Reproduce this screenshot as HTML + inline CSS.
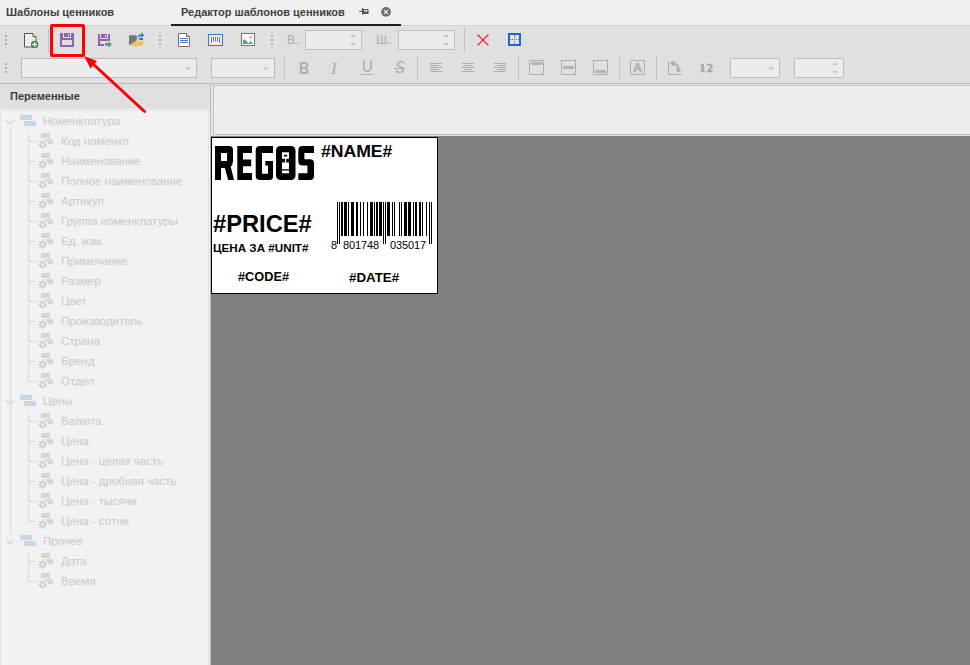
<!DOCTYPE html>
<html><head><meta charset="utf-8">
<style>
*{margin:0;padding:0;box-sizing:border-box}
html,body{width:970px;height:665px;overflow:hidden;background:#f0f0f0;font-family:"Liberation Sans",sans-serif}
.a{position:absolute}
.tab{font-size:11px;font-weight:bold;color:#404040;top:6px;white-space:nowrap}
.grip{width:2px;height:10px}
.grip i{position:absolute;left:0;width:2px;height:2px;background:#a9a9a9}
.sep{width:1px;background:#c2c2c2}
.spin{background:#ececec;border:1px solid #bdbdbd}
.ti{font-size:11.5px;color:#c8c8c8;white-space:nowrap;line-height:14px}
.lt{font-weight:bold;color:#000;white-space:nowrap;transform-origin:0 0}
.gl{font-size:12px;color:#acacac}
</style></head><body>
<!-- tabs -->
<div class="a" style="left:0;top:0;width:970px;height:25px;background:#f0f0f0"></div>
<div class="a tab" style="left:6px">Шаблоны ценников</div>
<div class="a tab" style="left:181px">Редактор шаблонов ценников</div>
<!-- toolbars -->
<div class="a" style="left:0;top:25px;width:970px;height:1px;background:#d6d6d6"></div>
<div class="a" style="left:0;top:26px;width:970px;height:57px;background:#e0e0e0"></div>
<div class="a" style="left:0;top:83px;width:970px;height:1px;background:#bcbcbc"></div>
<div class="a" style="left:171px;top:24px;width:230px;height:2px;background:#1e1e1e"></div>
<div class="a grip" style="left:5px;top:35px"><i style="top:0"></i><i style="top:4px"></i><i style="top:8px"></i></div>
<div class="a grip" style="left:159px;top:35px"><i style="top:0"></i><i style="top:4px"></i><i style="top:8px"></i></div>
<div class="a grip" style="left:271px;top:35px"><i style="top:0"></i><i style="top:4px"></i><i style="top:8px"></i></div>
<div class="a grip" style="left:5px;top:63px"><i style="top:0"></i><i style="top:4px"></i><i style="top:8px"></i></div>
<div class="a sep" style="left:48px;top:28px;height:24px"></div>
<div class="a sep" style="left:464px;top:28px;height:24px"></div>
<div class="a sep" style="left:284px;top:56px;height:24px"></div>
<div class="a sep" style="left:417px;top:56px;height:24px"></div>
<div class="a sep" style="left:518px;top:56px;height:24px"></div>
<div class="a sep" style="left:619px;top:56px;height:24px"></div>
<div class="a sep" style="left:656px;top:56px;height:24px"></div>
<!-- row1 icons -->
<svg class="a" style="left:0;top:0" width="970" height="84">
 <path d="M24.5 33.5h8.5v3h3v10.5h-11.5z" fill="#efefef" stroke="#555" stroke-width="1"/>
 <circle cx="34.6" cy="44.4" r="3.7" fill="#2e8b4a"/>
 <path d="M32.2 44.5h4.8M34.6 42.1v4.8" stroke="#fff" stroke-width="1.3"/>
 <path d="M60 33H63V38H71V33H74V47H60Z M62 40V45H72V40Z" fill="#9161b2" fill-rule="evenodd"/>
 <rect x="64" y="33" width="6" height="4" fill="#9161b2"/>
 <rect x="68" y="34" width="1" height="2" fill="#dfdfdf"/>
 <path d="M98 34H100V39H108V34H110V41H100V44H104V46H98Z" fill="#9161b2"/>
 <rect x="101" y="34" width="6" height="4" fill="#9161b2"/>
 <rect x="105" y="35" width="1" height="2" fill="#dfdfdf"/>
 <path d="M105 43H108.5V41.4L112 44.5L108.5 47.6V45.8H105Z" fill="#5a9e86"/>
 <path d="M129 45.5V36.3Q129 35.2 130 35.2H135.5Q136.5 35.2 136.8 36.3V40.5Z" fill="#777"/>
 <rect x="139" y="38" width="4" height="2" fill="#6e6e6e"/>
 <path d="M130.5 46L133.5 42H137L137.5 41H144L142 46Z" fill="#eec062"/>
 <path d="M137 38.5Q137.5 34.2 141.2 34.2V32.2L144.3 35.2L141.2 38V36.3Q138.5 36.3 137 38.5Z" fill="#3c7ec8"/>
 <path d="M178.5 33.5h8l3 3v10h-11z" fill="#fff" stroke="#737373" stroke-width="1"/>
 <path d="M186.5 33.5v3h3" fill="#ddd" stroke="#737373" stroke-width="1"/>
 <path d="M180 38.5h8M180 40.5h8M180 42.5h8" stroke="#3d7cc5" stroke-width="1"/>
 <rect x="208.5" y="34.5" width="14" height="11" fill="#efefef" stroke="#3d7cc5" stroke-width="1.1"/>
 <path d="M211.5 37v6M213.5 37v4.5M215.5 37v4.5M217.5 37v4.5M219.5 37v6" stroke="#7a7a7a" stroke-width="1"/>
 <rect x="241.5" y="33.5" width="13" height="12" fill="#fff" stroke="#777" stroke-width="1.1"/>
 <path d="M243 44V40.5L244.5 39L248.5 43.5L250.5 41L253 44Z" fill="#5a9e84"/>
 <circle cx="250.5" cy="37.3" r="1.5" fill="#eec062"/>
 <path d="M477.5 34.5l11 11M488.5 34.5l-11 11" stroke="#e0303e" stroke-width="1.4"/>
 <rect x="509" y="34" width="11" height="11" fill="#e4e4e4" stroke="#2566c8" stroke-width="2"/>
 <rect x="514" y="35" width="1" height="1" fill="#4f74ac"/><rect x="514" y="37" width="1" height="1" fill="#4f74ac"/><rect x="514" y="41" width="1" height="1" fill="#4f74ac"/><rect x="514" y="43" width="1" height="1" fill="#4f74ac"/><rect x="510" y="39" width="1" height="1" fill="#4f74ac"/><rect x="512" y="39" width="1" height="1" fill="#4f74ac"/><rect x="514" y="39" width="1" height="1" fill="#4f74ac"/><rect x="516" y="39" width="1" height="1" fill="#4f74ac"/><rect x="518" y="39" width="1" height="1" fill="#4f74ac"/>
 <path d="M359 11.3h3.5M362.5 8v6.8" stroke="#555" stroke-width="1.1"/>
 <rect x="363.5" y="9.5" width="4.5" height="4" fill="none" stroke="#555" stroke-width="1"/>
 <rect x="363" y="11.5" width="5" height="2.5" fill="#555"/>
 <circle cx="386" cy="11.9" r="4.9" fill="#6e6e6e"/>
 <path d="M384 9.9l4 4M388 9.9l-4 4" stroke="#f0f0f0" stroke-width="1.3"/>
</svg>
<div class="a gl" style="left:287px;top:33px;letter-spacing:-0.8px">В.:</div>
<div class="a spin" style="left:305px;top:30px;width:57px;height:20px"></div>
<svg class="a" style="left:349px;top:33px" width="8" height="14"><path d="M1 4l3-3 3 3z" fill="#c6c6c6"/><path d="M1 10l3 3 3-3z" fill="#c6c6c6"/></svg>
<div class="a gl" style="left:376px;top:33px;letter-spacing:-0.8px">Ш.:</div>
<div class="a spin" style="left:398px;top:30px;width:57px;height:20px"></div>
<svg class="a" style="left:442px;top:33px" width="8" height="14"><path d="M1 4l3-3 3 3z" fill="#c6c6c6"/><path d="M1 10l3 3 3-3z" fill="#c6c6c6"/></svg>
<!-- row2 -->
<div class="a spin" style="left:21px;top:58px;width:176px;height:20px"></div>
<svg class="a" style="left:184px;top:66px" width="8" height="6"><path d="M1 1.5h6l-3 3z" fill="#c6c6c6"/></svg>
<div class="a spin" style="left:211px;top:58px;width:64px;height:20px"></div>
<svg class="a" style="left:262px;top:66px" width="8" height="6"><path d="M1 1.5h6l-3 3z" fill="#c6c6c6"/></svg>
<div class="a" style="left:299px;top:60px;font-size:16px;font-weight:bold;color:#acacac;transform:scaleX(0.87);transform-origin:0 0">B</div>
<div class="a" style="left:331px;top:58px;font-size:17.5px;font-style:italic;font-family:'Liberation Serif',serif;color:#acacac">I</div>
<div class="a" style="left:362px;top:58px;font-size:16px;color:#acacac;transform:scaleX(0.92);transform-origin:0 0">U</div>
<div class="a" style="left:361px;top:74px;width:12px;height:1px;background:#acacac"></div>
<div class="a" style="left:394.5px;top:59px;font-size:16px;font-style:italic;color:#acacac;transform:scaleX(0.9);transform-origin:0 0">S</div>
<div class="a" style="left:393.5px;top:68px;width:11px;height:1px;background:#acacac"></div>
<svg class="a" style="left:428px;top:60px" width="16" height="14"><path d="M2 3.5h12M2 5.5h9M2 7.5h12M2 9.5h9M2 11.5h12" stroke="#adadad" stroke-width="1"/></svg>
<svg class="a" style="left:460px;top:60px" width="16" height="14"><path d="M2 3.5h12M4 5.5h8M2 7.5h12M4 9.5h8M2 11.5h12" stroke="#adadad" stroke-width="1"/></svg>
<svg class="a" style="left:492px;top:60px" width="16" height="14"><path d="M2 3.5h12M5 5.5h9M2 7.5h12M5 9.5h9M2 11.5h12" stroke="#adadad" stroke-width="1"/></svg>
<svg class="a" style="left:528px;top:59px" width="17" height="17"><rect x="1.5" y="1.5" width="14" height="14" fill="none" stroke="#adadad"/><rect x="3" y="3" width="11" height="3" fill="#b4b4b4"/></svg>
<svg class="a" style="left:560px;top:59px" width="17" height="17"><rect x="1.5" y="1.5" width="14" height="14" fill="none" stroke="#adadad"/><rect x="3" y="7" width="11" height="3" fill="#b4b4b4"/></svg>
<svg class="a" style="left:592px;top:59px" width="17" height="17"><rect x="1.5" y="1.5" width="14" height="14" fill="none" stroke="#adadad"/><rect x="3" y="11" width="11" height="3" fill="#b4b4b4"/></svg>
<svg class="a" style="left:629px;top:59px" width="17" height="17"><rect x="1.5" y="1.5" width="14" height="14" fill="none" stroke="#adadad"/><text x="8.5" y="13" text-anchor="middle" font-family="Liberation Sans" font-weight="bold" font-size="12.5" fill="#b0b0b0" stroke="#b0b0b0" stroke-width="0.4">A</text></svg>
<svg class="a" style="left:0;top:0" width="970" height="84">
 <path d="M668.5 61v13.5h13.5" fill="none" stroke="#acacac" stroke-width="1"/>
 <path d="M669.9 63.4L673.6 60V66.8Z" fill="#acacac"/>
 <path d="M673 63.4A5.6 5.8 0 0 1 678.5 69.5" fill="none" stroke="#acacac" stroke-width="2.1"/>
 <path d="M675 69.2H682L678.4 72.8Z" fill="#acacac"/>
</svg>
<div class="a" style="left:699.5px;top:61px;font-size:12px;font-weight:bold;font-family:'Liberation Serif',serif;color:#a4a4a4;-webkit-text-stroke:0.5px #a4a4a4;letter-spacing:1.3px">12</div>
<div class="a spin" style="left:730px;top:58px;width:50px;height:20px"></div>
<svg class="a" style="left:767px;top:66px" width="8" height="6"><path d="M1 1.5h6l-3 3z" fill="#c6c6c6"/></svg>
<div class="a spin" style="left:794px;top:58px;width:50px;height:20px"></div>
<svg class="a" style="left:831px;top:61px" width="8" height="14"><path d="M1 4l3-3 3 3z" fill="#c6c6c6"/><path d="M1 10l3 3 3-3z" fill="#c6c6c6"/></svg>

<!-- left panel -->
<div class="a" style="left:0;top:84px;width:210px;height:25px;background:#e0e0e0"></div>
<div class="a" style="left:10px;top:90px;font-size:11px;font-weight:bold;color:#3b3b3b">Переменные</div>
<div class="a" style="left:0;top:109px;width:210px;height:556px;background:#f0f0f0"></div>
<div class="a" style="left:0;top:110px;width:209px;height:555px;background:#f2f2f2;border-left:1px solid #e4e4e4;border-top:1px solid #e4e4e4;border-right:1px solid #e4e4e4"></div>
<svg class="a" style="left:0;top:0" width="210" height="665"><path d="M6.5 120.5 L10 124 L13.5 120.5" fill="none" stroke="#d2d2d2" stroke-width="1.2"/><rect x="17" y="121" width="1" height="1" fill="#c8c8c8"/><rect x="20" y="115" width="12" height="5" fill="#c9d6e6"/><rect x="24" y="121" width="12" height="5" fill="#c9d6e6"/><rect x="41" y="133" width="9" height="5" fill="#d6d6d6"/><rect x="44" y="139" width="9" height="5" fill="#d6d6d6"/><circle cx="42.5" cy="144.5" r="5.5" fill="#f2f2f2"/><g stroke="#c3d2e4" stroke-width="1.3"><line x1="44.70" y1="144.50" x2="46.80" y2="144.50"/><line x1="44.06" y1="146.06" x2="45.54" y2="147.54"/><line x1="42.50" y1="146.70" x2="42.50" y2="148.80"/><line x1="40.94" y1="146.06" x2="39.46" y2="147.54"/><line x1="40.30" y1="144.50" x2="38.20" y2="144.50"/><line x1="40.94" y1="142.94" x2="39.46" y2="141.46"/><line x1="42.50" y1="142.30" x2="42.50" y2="140.20"/><line x1="44.06" y1="142.94" x2="45.54" y2="141.46"/><circle cx="42.5" cy="144.5" r="2.3" fill="none" stroke-width="1.4"/></g><rect x="29" y="141" width="1" height="1" fill="#c4c4c4"/><rect x="31" y="141" width="1" height="1" fill="#c4c4c4"/><rect x="33" y="141" width="1" height="1" fill="#c4c4c4"/><rect x="35" y="141" width="1" height="1" fill="#c4c4c4"/><rect x="41" y="153" width="9" height="5" fill="#d6d6d6"/><rect x="44" y="159" width="9" height="5" fill="#d6d6d6"/><circle cx="42.5" cy="164.5" r="5.5" fill="#f2f2f2"/><g stroke="#c3d2e4" stroke-width="1.3"><line x1="44.70" y1="164.50" x2="46.80" y2="164.50"/><line x1="44.06" y1="166.06" x2="45.54" y2="167.54"/><line x1="42.50" y1="166.70" x2="42.50" y2="168.80"/><line x1="40.94" y1="166.06" x2="39.46" y2="167.54"/><line x1="40.30" y1="164.50" x2="38.20" y2="164.50"/><line x1="40.94" y1="162.94" x2="39.46" y2="161.46"/><line x1="42.50" y1="162.30" x2="42.50" y2="160.20"/><line x1="44.06" y1="162.94" x2="45.54" y2="161.46"/><circle cx="42.5" cy="164.5" r="2.3" fill="none" stroke-width="1.4"/></g><rect x="29" y="161" width="1" height="1" fill="#c4c4c4"/><rect x="31" y="161" width="1" height="1" fill="#c4c4c4"/><rect x="33" y="161" width="1" height="1" fill="#c4c4c4"/><rect x="35" y="161" width="1" height="1" fill="#c4c4c4"/><rect x="41" y="173" width="9" height="5" fill="#d6d6d6"/><rect x="44" y="179" width="9" height="5" fill="#d6d6d6"/><circle cx="42.5" cy="184.5" r="5.5" fill="#f2f2f2"/><g stroke="#c3d2e4" stroke-width="1.3"><line x1="44.70" y1="184.50" x2="46.80" y2="184.50"/><line x1="44.06" y1="186.06" x2="45.54" y2="187.54"/><line x1="42.50" y1="186.70" x2="42.50" y2="188.80"/><line x1="40.94" y1="186.06" x2="39.46" y2="187.54"/><line x1="40.30" y1="184.50" x2="38.20" y2="184.50"/><line x1="40.94" y1="182.94" x2="39.46" y2="181.46"/><line x1="42.50" y1="182.30" x2="42.50" y2="180.20"/><line x1="44.06" y1="182.94" x2="45.54" y2="181.46"/><circle cx="42.5" cy="184.5" r="2.3" fill="none" stroke-width="1.4"/></g><rect x="29" y="181" width="1" height="1" fill="#c4c4c4"/><rect x="31" y="181" width="1" height="1" fill="#c4c4c4"/><rect x="33" y="181" width="1" height="1" fill="#c4c4c4"/><rect x="35" y="181" width="1" height="1" fill="#c4c4c4"/><rect x="41" y="193" width="9" height="5" fill="#d6d6d6"/><rect x="44" y="199" width="9" height="5" fill="#d6d6d6"/><circle cx="42.5" cy="204.5" r="5.5" fill="#f2f2f2"/><g stroke="#c3d2e4" stroke-width="1.3"><line x1="44.70" y1="204.50" x2="46.80" y2="204.50"/><line x1="44.06" y1="206.06" x2="45.54" y2="207.54"/><line x1="42.50" y1="206.70" x2="42.50" y2="208.80"/><line x1="40.94" y1="206.06" x2="39.46" y2="207.54"/><line x1="40.30" y1="204.50" x2="38.20" y2="204.50"/><line x1="40.94" y1="202.94" x2="39.46" y2="201.46"/><line x1="42.50" y1="202.30" x2="42.50" y2="200.20"/><line x1="44.06" y1="202.94" x2="45.54" y2="201.46"/><circle cx="42.5" cy="204.5" r="2.3" fill="none" stroke-width="1.4"/></g><rect x="29" y="201" width="1" height="1" fill="#c4c4c4"/><rect x="31" y="201" width="1" height="1" fill="#c4c4c4"/><rect x="33" y="201" width="1" height="1" fill="#c4c4c4"/><rect x="35" y="201" width="1" height="1" fill="#c4c4c4"/><rect x="41" y="213" width="9" height="5" fill="#d6d6d6"/><rect x="44" y="219" width="9" height="5" fill="#d6d6d6"/><circle cx="42.5" cy="224.5" r="5.5" fill="#f2f2f2"/><g stroke="#c3d2e4" stroke-width="1.3"><line x1="44.70" y1="224.50" x2="46.80" y2="224.50"/><line x1="44.06" y1="226.06" x2="45.54" y2="227.54"/><line x1="42.50" y1="226.70" x2="42.50" y2="228.80"/><line x1="40.94" y1="226.06" x2="39.46" y2="227.54"/><line x1="40.30" y1="224.50" x2="38.20" y2="224.50"/><line x1="40.94" y1="222.94" x2="39.46" y2="221.46"/><line x1="42.50" y1="222.30" x2="42.50" y2="220.20"/><line x1="44.06" y1="222.94" x2="45.54" y2="221.46"/><circle cx="42.5" cy="224.5" r="2.3" fill="none" stroke-width="1.4"/></g><rect x="29" y="221" width="1" height="1" fill="#c4c4c4"/><rect x="31" y="221" width="1" height="1" fill="#c4c4c4"/><rect x="33" y="221" width="1" height="1" fill="#c4c4c4"/><rect x="35" y="221" width="1" height="1" fill="#c4c4c4"/><rect x="41" y="233" width="9" height="5" fill="#d6d6d6"/><rect x="44" y="239" width="9" height="5" fill="#d6d6d6"/><circle cx="42.5" cy="244.5" r="5.5" fill="#f2f2f2"/><g stroke="#c3d2e4" stroke-width="1.3"><line x1="44.70" y1="244.50" x2="46.80" y2="244.50"/><line x1="44.06" y1="246.06" x2="45.54" y2="247.54"/><line x1="42.50" y1="246.70" x2="42.50" y2="248.80"/><line x1="40.94" y1="246.06" x2="39.46" y2="247.54"/><line x1="40.30" y1="244.50" x2="38.20" y2="244.50"/><line x1="40.94" y1="242.94" x2="39.46" y2="241.46"/><line x1="42.50" y1="242.30" x2="42.50" y2="240.20"/><line x1="44.06" y1="242.94" x2="45.54" y2="241.46"/><circle cx="42.5" cy="244.5" r="2.3" fill="none" stroke-width="1.4"/></g><rect x="29" y="241" width="1" height="1" fill="#c4c4c4"/><rect x="31" y="241" width="1" height="1" fill="#c4c4c4"/><rect x="33" y="241" width="1" height="1" fill="#c4c4c4"/><rect x="35" y="241" width="1" height="1" fill="#c4c4c4"/><rect x="41" y="253" width="9" height="5" fill="#d6d6d6"/><rect x="44" y="259" width="9" height="5" fill="#d6d6d6"/><circle cx="42.5" cy="264.5" r="5.5" fill="#f2f2f2"/><g stroke="#c3d2e4" stroke-width="1.3"><line x1="44.70" y1="264.50" x2="46.80" y2="264.50"/><line x1="44.06" y1="266.06" x2="45.54" y2="267.54"/><line x1="42.50" y1="266.70" x2="42.50" y2="268.80"/><line x1="40.94" y1="266.06" x2="39.46" y2="267.54"/><line x1="40.30" y1="264.50" x2="38.20" y2="264.50"/><line x1="40.94" y1="262.94" x2="39.46" y2="261.46"/><line x1="42.50" y1="262.30" x2="42.50" y2="260.20"/><line x1="44.06" y1="262.94" x2="45.54" y2="261.46"/><circle cx="42.5" cy="264.5" r="2.3" fill="none" stroke-width="1.4"/></g><rect x="29" y="261" width="1" height="1" fill="#c4c4c4"/><rect x="31" y="261" width="1" height="1" fill="#c4c4c4"/><rect x="33" y="261" width="1" height="1" fill="#c4c4c4"/><rect x="35" y="261" width="1" height="1" fill="#c4c4c4"/><rect x="41" y="273" width="9" height="5" fill="#d6d6d6"/><rect x="44" y="279" width="9" height="5" fill="#d6d6d6"/><circle cx="42.5" cy="284.5" r="5.5" fill="#f2f2f2"/><g stroke="#c3d2e4" stroke-width="1.3"><line x1="44.70" y1="284.50" x2="46.80" y2="284.50"/><line x1="44.06" y1="286.06" x2="45.54" y2="287.54"/><line x1="42.50" y1="286.70" x2="42.50" y2="288.80"/><line x1="40.94" y1="286.06" x2="39.46" y2="287.54"/><line x1="40.30" y1="284.50" x2="38.20" y2="284.50"/><line x1="40.94" y1="282.94" x2="39.46" y2="281.46"/><line x1="42.50" y1="282.30" x2="42.50" y2="280.20"/><line x1="44.06" y1="282.94" x2="45.54" y2="281.46"/><circle cx="42.5" cy="284.5" r="2.3" fill="none" stroke-width="1.4"/></g><rect x="29" y="281" width="1" height="1" fill="#c4c4c4"/><rect x="31" y="281" width="1" height="1" fill="#c4c4c4"/><rect x="33" y="281" width="1" height="1" fill="#c4c4c4"/><rect x="35" y="281" width="1" height="1" fill="#c4c4c4"/><rect x="41" y="293" width="9" height="5" fill="#d6d6d6"/><rect x="44" y="299" width="9" height="5" fill="#d6d6d6"/><circle cx="42.5" cy="304.5" r="5.5" fill="#f2f2f2"/><g stroke="#c3d2e4" stroke-width="1.3"><line x1="44.70" y1="304.50" x2="46.80" y2="304.50"/><line x1="44.06" y1="306.06" x2="45.54" y2="307.54"/><line x1="42.50" y1="306.70" x2="42.50" y2="308.80"/><line x1="40.94" y1="306.06" x2="39.46" y2="307.54"/><line x1="40.30" y1="304.50" x2="38.20" y2="304.50"/><line x1="40.94" y1="302.94" x2="39.46" y2="301.46"/><line x1="42.50" y1="302.30" x2="42.50" y2="300.20"/><line x1="44.06" y1="302.94" x2="45.54" y2="301.46"/><circle cx="42.5" cy="304.5" r="2.3" fill="none" stroke-width="1.4"/></g><rect x="29" y="301" width="1" height="1" fill="#c4c4c4"/><rect x="31" y="301" width="1" height="1" fill="#c4c4c4"/><rect x="33" y="301" width="1" height="1" fill="#c4c4c4"/><rect x="35" y="301" width="1" height="1" fill="#c4c4c4"/><rect x="41" y="313" width="9" height="5" fill="#d6d6d6"/><rect x="44" y="319" width="9" height="5" fill="#d6d6d6"/><circle cx="42.5" cy="324.5" r="5.5" fill="#f2f2f2"/><g stroke="#c3d2e4" stroke-width="1.3"><line x1="44.70" y1="324.50" x2="46.80" y2="324.50"/><line x1="44.06" y1="326.06" x2="45.54" y2="327.54"/><line x1="42.50" y1="326.70" x2="42.50" y2="328.80"/><line x1="40.94" y1="326.06" x2="39.46" y2="327.54"/><line x1="40.30" y1="324.50" x2="38.20" y2="324.50"/><line x1="40.94" y1="322.94" x2="39.46" y2="321.46"/><line x1="42.50" y1="322.30" x2="42.50" y2="320.20"/><line x1="44.06" y1="322.94" x2="45.54" y2="321.46"/><circle cx="42.5" cy="324.5" r="2.3" fill="none" stroke-width="1.4"/></g><rect x="29" y="321" width="1" height="1" fill="#c4c4c4"/><rect x="31" y="321" width="1" height="1" fill="#c4c4c4"/><rect x="33" y="321" width="1" height="1" fill="#c4c4c4"/><rect x="35" y="321" width="1" height="1" fill="#c4c4c4"/><rect x="41" y="333" width="9" height="5" fill="#d6d6d6"/><rect x="44" y="339" width="9" height="5" fill="#d6d6d6"/><circle cx="42.5" cy="344.5" r="5.5" fill="#f2f2f2"/><g stroke="#c3d2e4" stroke-width="1.3"><line x1="44.70" y1="344.50" x2="46.80" y2="344.50"/><line x1="44.06" y1="346.06" x2="45.54" y2="347.54"/><line x1="42.50" y1="346.70" x2="42.50" y2="348.80"/><line x1="40.94" y1="346.06" x2="39.46" y2="347.54"/><line x1="40.30" y1="344.50" x2="38.20" y2="344.50"/><line x1="40.94" y1="342.94" x2="39.46" y2="341.46"/><line x1="42.50" y1="342.30" x2="42.50" y2="340.20"/><line x1="44.06" y1="342.94" x2="45.54" y2="341.46"/><circle cx="42.5" cy="344.5" r="2.3" fill="none" stroke-width="1.4"/></g><rect x="29" y="341" width="1" height="1" fill="#c4c4c4"/><rect x="31" y="341" width="1" height="1" fill="#c4c4c4"/><rect x="33" y="341" width="1" height="1" fill="#c4c4c4"/><rect x="35" y="341" width="1" height="1" fill="#c4c4c4"/><rect x="41" y="353" width="9" height="5" fill="#d6d6d6"/><rect x="44" y="359" width="9" height="5" fill="#d6d6d6"/><circle cx="42.5" cy="364.5" r="5.5" fill="#f2f2f2"/><g stroke="#c3d2e4" stroke-width="1.3"><line x1="44.70" y1="364.50" x2="46.80" y2="364.50"/><line x1="44.06" y1="366.06" x2="45.54" y2="367.54"/><line x1="42.50" y1="366.70" x2="42.50" y2="368.80"/><line x1="40.94" y1="366.06" x2="39.46" y2="367.54"/><line x1="40.30" y1="364.50" x2="38.20" y2="364.50"/><line x1="40.94" y1="362.94" x2="39.46" y2="361.46"/><line x1="42.50" y1="362.30" x2="42.50" y2="360.20"/><line x1="44.06" y1="362.94" x2="45.54" y2="361.46"/><circle cx="42.5" cy="364.5" r="2.3" fill="none" stroke-width="1.4"/></g><rect x="29" y="361" width="1" height="1" fill="#c4c4c4"/><rect x="31" y="361" width="1" height="1" fill="#c4c4c4"/><rect x="33" y="361" width="1" height="1" fill="#c4c4c4"/><rect x="35" y="361" width="1" height="1" fill="#c4c4c4"/><rect x="41" y="373" width="9" height="5" fill="#d6d6d6"/><rect x="44" y="379" width="9" height="5" fill="#d6d6d6"/><circle cx="42.5" cy="384.5" r="5.5" fill="#f2f2f2"/><g stroke="#c3d2e4" stroke-width="1.3"><line x1="44.70" y1="384.50" x2="46.80" y2="384.50"/><line x1="44.06" y1="386.06" x2="45.54" y2="387.54"/><line x1="42.50" y1="386.70" x2="42.50" y2="388.80"/><line x1="40.94" y1="386.06" x2="39.46" y2="387.54"/><line x1="40.30" y1="384.50" x2="38.20" y2="384.50"/><line x1="40.94" y1="382.94" x2="39.46" y2="381.46"/><line x1="42.50" y1="382.30" x2="42.50" y2="380.20"/><line x1="44.06" y1="382.94" x2="45.54" y2="381.46"/><circle cx="42.5" cy="384.5" r="2.3" fill="none" stroke-width="1.4"/></g><rect x="29" y="381" width="1" height="1" fill="#c4c4c4"/><rect x="31" y="381" width="1" height="1" fill="#c4c4c4"/><rect x="33" y="381" width="1" height="1" fill="#c4c4c4"/><rect x="35" y="381" width="1" height="1" fill="#c4c4c4"/><path d="M6.5 400.5 L10 404 L13.5 400.5" fill="none" stroke="#d2d2d2" stroke-width="1.2"/><rect x="17" y="401" width="1" height="1" fill="#c8c8c8"/><rect x="20" y="395" width="12" height="5" fill="#c9d6e6"/><rect x="24" y="401" width="12" height="5" fill="#c9d6e6"/><rect x="41" y="413" width="9" height="5" fill="#d6d6d6"/><rect x="44" y="419" width="9" height="5" fill="#d6d6d6"/><circle cx="42.5" cy="424.5" r="5.5" fill="#f2f2f2"/><g stroke="#c3d2e4" stroke-width="1.3"><line x1="44.70" y1="424.50" x2="46.80" y2="424.50"/><line x1="44.06" y1="426.06" x2="45.54" y2="427.54"/><line x1="42.50" y1="426.70" x2="42.50" y2="428.80"/><line x1="40.94" y1="426.06" x2="39.46" y2="427.54"/><line x1="40.30" y1="424.50" x2="38.20" y2="424.50"/><line x1="40.94" y1="422.94" x2="39.46" y2="421.46"/><line x1="42.50" y1="422.30" x2="42.50" y2="420.20"/><line x1="44.06" y1="422.94" x2="45.54" y2="421.46"/><circle cx="42.5" cy="424.5" r="2.3" fill="none" stroke-width="1.4"/></g><rect x="29" y="421" width="1" height="1" fill="#c4c4c4"/><rect x="31" y="421" width="1" height="1" fill="#c4c4c4"/><rect x="33" y="421" width="1" height="1" fill="#c4c4c4"/><rect x="35" y="421" width="1" height="1" fill="#c4c4c4"/><rect x="41" y="433" width="9" height="5" fill="#d6d6d6"/><rect x="44" y="439" width="9" height="5" fill="#d6d6d6"/><circle cx="42.5" cy="444.5" r="5.5" fill="#f2f2f2"/><g stroke="#c3d2e4" stroke-width="1.3"><line x1="44.70" y1="444.50" x2="46.80" y2="444.50"/><line x1="44.06" y1="446.06" x2="45.54" y2="447.54"/><line x1="42.50" y1="446.70" x2="42.50" y2="448.80"/><line x1="40.94" y1="446.06" x2="39.46" y2="447.54"/><line x1="40.30" y1="444.50" x2="38.20" y2="444.50"/><line x1="40.94" y1="442.94" x2="39.46" y2="441.46"/><line x1="42.50" y1="442.30" x2="42.50" y2="440.20"/><line x1="44.06" y1="442.94" x2="45.54" y2="441.46"/><circle cx="42.5" cy="444.5" r="2.3" fill="none" stroke-width="1.4"/></g><rect x="29" y="441" width="1" height="1" fill="#c4c4c4"/><rect x="31" y="441" width="1" height="1" fill="#c4c4c4"/><rect x="33" y="441" width="1" height="1" fill="#c4c4c4"/><rect x="35" y="441" width="1" height="1" fill="#c4c4c4"/><rect x="41" y="453" width="9" height="5" fill="#d6d6d6"/><rect x="44" y="459" width="9" height="5" fill="#d6d6d6"/><circle cx="42.5" cy="464.5" r="5.5" fill="#f2f2f2"/><g stroke="#c3d2e4" stroke-width="1.3"><line x1="44.70" y1="464.50" x2="46.80" y2="464.50"/><line x1="44.06" y1="466.06" x2="45.54" y2="467.54"/><line x1="42.50" y1="466.70" x2="42.50" y2="468.80"/><line x1="40.94" y1="466.06" x2="39.46" y2="467.54"/><line x1="40.30" y1="464.50" x2="38.20" y2="464.50"/><line x1="40.94" y1="462.94" x2="39.46" y2="461.46"/><line x1="42.50" y1="462.30" x2="42.50" y2="460.20"/><line x1="44.06" y1="462.94" x2="45.54" y2="461.46"/><circle cx="42.5" cy="464.5" r="2.3" fill="none" stroke-width="1.4"/></g><rect x="29" y="461" width="1" height="1" fill="#c4c4c4"/><rect x="31" y="461" width="1" height="1" fill="#c4c4c4"/><rect x="33" y="461" width="1" height="1" fill="#c4c4c4"/><rect x="35" y="461" width="1" height="1" fill="#c4c4c4"/><rect x="41" y="473" width="9" height="5" fill="#d6d6d6"/><rect x="44" y="479" width="9" height="5" fill="#d6d6d6"/><circle cx="42.5" cy="484.5" r="5.5" fill="#f2f2f2"/><g stroke="#c3d2e4" stroke-width="1.3"><line x1="44.70" y1="484.50" x2="46.80" y2="484.50"/><line x1="44.06" y1="486.06" x2="45.54" y2="487.54"/><line x1="42.50" y1="486.70" x2="42.50" y2="488.80"/><line x1="40.94" y1="486.06" x2="39.46" y2="487.54"/><line x1="40.30" y1="484.50" x2="38.20" y2="484.50"/><line x1="40.94" y1="482.94" x2="39.46" y2="481.46"/><line x1="42.50" y1="482.30" x2="42.50" y2="480.20"/><line x1="44.06" y1="482.94" x2="45.54" y2="481.46"/><circle cx="42.5" cy="484.5" r="2.3" fill="none" stroke-width="1.4"/></g><rect x="29" y="481" width="1" height="1" fill="#c4c4c4"/><rect x="31" y="481" width="1" height="1" fill="#c4c4c4"/><rect x="33" y="481" width="1" height="1" fill="#c4c4c4"/><rect x="35" y="481" width="1" height="1" fill="#c4c4c4"/><rect x="41" y="493" width="9" height="5" fill="#d6d6d6"/><rect x="44" y="499" width="9" height="5" fill="#d6d6d6"/><circle cx="42.5" cy="504.5" r="5.5" fill="#f2f2f2"/><g stroke="#c3d2e4" stroke-width="1.3"><line x1="44.70" y1="504.50" x2="46.80" y2="504.50"/><line x1="44.06" y1="506.06" x2="45.54" y2="507.54"/><line x1="42.50" y1="506.70" x2="42.50" y2="508.80"/><line x1="40.94" y1="506.06" x2="39.46" y2="507.54"/><line x1="40.30" y1="504.50" x2="38.20" y2="504.50"/><line x1="40.94" y1="502.94" x2="39.46" y2="501.46"/><line x1="42.50" y1="502.30" x2="42.50" y2="500.20"/><line x1="44.06" y1="502.94" x2="45.54" y2="501.46"/><circle cx="42.5" cy="504.5" r="2.3" fill="none" stroke-width="1.4"/></g><rect x="29" y="501" width="1" height="1" fill="#c4c4c4"/><rect x="31" y="501" width="1" height="1" fill="#c4c4c4"/><rect x="33" y="501" width="1" height="1" fill="#c4c4c4"/><rect x="35" y="501" width="1" height="1" fill="#c4c4c4"/><rect x="41" y="513" width="9" height="5" fill="#d6d6d6"/><rect x="44" y="519" width="9" height="5" fill="#d6d6d6"/><circle cx="42.5" cy="524.5" r="5.5" fill="#f2f2f2"/><g stroke="#c3d2e4" stroke-width="1.3"><line x1="44.70" y1="524.50" x2="46.80" y2="524.50"/><line x1="44.06" y1="526.06" x2="45.54" y2="527.54"/><line x1="42.50" y1="526.70" x2="42.50" y2="528.80"/><line x1="40.94" y1="526.06" x2="39.46" y2="527.54"/><line x1="40.30" y1="524.50" x2="38.20" y2="524.50"/><line x1="40.94" y1="522.94" x2="39.46" y2="521.46"/><line x1="42.50" y1="522.30" x2="42.50" y2="520.20"/><line x1="44.06" y1="522.94" x2="45.54" y2="521.46"/><circle cx="42.5" cy="524.5" r="2.3" fill="none" stroke-width="1.4"/></g><rect x="29" y="521" width="1" height="1" fill="#c4c4c4"/><rect x="31" y="521" width="1" height="1" fill="#c4c4c4"/><rect x="33" y="521" width="1" height="1" fill="#c4c4c4"/><rect x="35" y="521" width="1" height="1" fill="#c4c4c4"/><path d="M6.5 540.5 L10 544 L13.5 540.5" fill="none" stroke="#d2d2d2" stroke-width="1.2"/><rect x="17" y="541" width="1" height="1" fill="#c8c8c8"/><rect x="20" y="535" width="12" height="5" fill="#c9d6e6"/><rect x="24" y="541" width="12" height="5" fill="#c9d6e6"/><rect x="41" y="553" width="9" height="5" fill="#d6d6d6"/><rect x="44" y="559" width="9" height="5" fill="#d6d6d6"/><circle cx="42.5" cy="564.5" r="5.5" fill="#f2f2f2"/><g stroke="#c3d2e4" stroke-width="1.3"><line x1="44.70" y1="564.50" x2="46.80" y2="564.50"/><line x1="44.06" y1="566.06" x2="45.54" y2="567.54"/><line x1="42.50" y1="566.70" x2="42.50" y2="568.80"/><line x1="40.94" y1="566.06" x2="39.46" y2="567.54"/><line x1="40.30" y1="564.50" x2="38.20" y2="564.50"/><line x1="40.94" y1="562.94" x2="39.46" y2="561.46"/><line x1="42.50" y1="562.30" x2="42.50" y2="560.20"/><line x1="44.06" y1="562.94" x2="45.54" y2="561.46"/><circle cx="42.5" cy="564.5" r="2.3" fill="none" stroke-width="1.4"/></g><rect x="29" y="561" width="1" height="1" fill="#c4c4c4"/><rect x="31" y="561" width="1" height="1" fill="#c4c4c4"/><rect x="33" y="561" width="1" height="1" fill="#c4c4c4"/><rect x="35" y="561" width="1" height="1" fill="#c4c4c4"/><rect x="41" y="573" width="9" height="5" fill="#d6d6d6"/><rect x="44" y="579" width="9" height="5" fill="#d6d6d6"/><circle cx="42.5" cy="584.5" r="5.5" fill="#f2f2f2"/><g stroke="#c3d2e4" stroke-width="1.3"><line x1="44.70" y1="584.50" x2="46.80" y2="584.50"/><line x1="44.06" y1="586.06" x2="45.54" y2="587.54"/><line x1="42.50" y1="586.70" x2="42.50" y2="588.80"/><line x1="40.94" y1="586.06" x2="39.46" y2="587.54"/><line x1="40.30" y1="584.50" x2="38.20" y2="584.50"/><line x1="40.94" y1="582.94" x2="39.46" y2="581.46"/><line x1="42.50" y1="582.30" x2="42.50" y2="580.20"/><line x1="44.06" y1="582.94" x2="45.54" y2="581.46"/><circle cx="42.5" cy="584.5" r="2.3" fill="none" stroke-width="1.4"/></g><rect x="29" y="581" width="1" height="1" fill="#c4c4c4"/><rect x="31" y="581" width="1" height="1" fill="#c4c4c4"/><rect x="33" y="581" width="1" height="1" fill="#c4c4c4"/><rect x="35" y="581" width="1" height="1" fill="#c4c4c4"/><rect x="10" y="128" width="1" height="1" fill="#c4c4c4"/><rect x="10" y="130" width="1" height="1" fill="#c4c4c4"/><rect x="10" y="132" width="1" height="1" fill="#c4c4c4"/><rect x="10" y="134" width="1" height="1" fill="#c4c4c4"/><rect x="10" y="136" width="1" height="1" fill="#c4c4c4"/><rect x="10" y="138" width="1" height="1" fill="#c4c4c4"/><rect x="10" y="140" width="1" height="1" fill="#c4c4c4"/><rect x="10" y="142" width="1" height="1" fill="#c4c4c4"/><rect x="10" y="144" width="1" height="1" fill="#c4c4c4"/><rect x="10" y="146" width="1" height="1" fill="#c4c4c4"/><rect x="10" y="148" width="1" height="1" fill="#c4c4c4"/><rect x="10" y="150" width="1" height="1" fill="#c4c4c4"/><rect x="10" y="152" width="1" height="1" fill="#c4c4c4"/><rect x="10" y="154" width="1" height="1" fill="#c4c4c4"/><rect x="10" y="156" width="1" height="1" fill="#c4c4c4"/><rect x="10" y="158" width="1" height="1" fill="#c4c4c4"/><rect x="10" y="160" width="1" height="1" fill="#c4c4c4"/><rect x="10" y="162" width="1" height="1" fill="#c4c4c4"/><rect x="10" y="164" width="1" height="1" fill="#c4c4c4"/><rect x="10" y="166" width="1" height="1" fill="#c4c4c4"/><rect x="10" y="168" width="1" height="1" fill="#c4c4c4"/><rect x="10" y="170" width="1" height="1" fill="#c4c4c4"/><rect x="10" y="172" width="1" height="1" fill="#c4c4c4"/><rect x="10" y="174" width="1" height="1" fill="#c4c4c4"/><rect x="10" y="176" width="1" height="1" fill="#c4c4c4"/><rect x="10" y="178" width="1" height="1" fill="#c4c4c4"/><rect x="10" y="180" width="1" height="1" fill="#c4c4c4"/><rect x="10" y="182" width="1" height="1" fill="#c4c4c4"/><rect x="10" y="184" width="1" height="1" fill="#c4c4c4"/><rect x="10" y="186" width="1" height="1" fill="#c4c4c4"/><rect x="10" y="188" width="1" height="1" fill="#c4c4c4"/><rect x="10" y="190" width="1" height="1" fill="#c4c4c4"/><rect x="10" y="192" width="1" height="1" fill="#c4c4c4"/><rect x="10" y="194" width="1" height="1" fill="#c4c4c4"/><rect x="10" y="196" width="1" height="1" fill="#c4c4c4"/><rect x="10" y="198" width="1" height="1" fill="#c4c4c4"/><rect x="10" y="200" width="1" height="1" fill="#c4c4c4"/><rect x="10" y="202" width="1" height="1" fill="#c4c4c4"/><rect x="10" y="204" width="1" height="1" fill="#c4c4c4"/><rect x="10" y="206" width="1" height="1" fill="#c4c4c4"/><rect x="10" y="208" width="1" height="1" fill="#c4c4c4"/><rect x="10" y="210" width="1" height="1" fill="#c4c4c4"/><rect x="10" y="212" width="1" height="1" fill="#c4c4c4"/><rect x="10" y="214" width="1" height="1" fill="#c4c4c4"/><rect x="10" y="216" width="1" height="1" fill="#c4c4c4"/><rect x="10" y="218" width="1" height="1" fill="#c4c4c4"/><rect x="10" y="220" width="1" height="1" fill="#c4c4c4"/><rect x="10" y="222" width="1" height="1" fill="#c4c4c4"/><rect x="10" y="224" width="1" height="1" fill="#c4c4c4"/><rect x="10" y="226" width="1" height="1" fill="#c4c4c4"/><rect x="10" y="228" width="1" height="1" fill="#c4c4c4"/><rect x="10" y="230" width="1" height="1" fill="#c4c4c4"/><rect x="10" y="232" width="1" height="1" fill="#c4c4c4"/><rect x="10" y="234" width="1" height="1" fill="#c4c4c4"/><rect x="10" y="236" width="1" height="1" fill="#c4c4c4"/><rect x="10" y="238" width="1" height="1" fill="#c4c4c4"/><rect x="10" y="240" width="1" height="1" fill="#c4c4c4"/><rect x="10" y="242" width="1" height="1" fill="#c4c4c4"/><rect x="10" y="244" width="1" height="1" fill="#c4c4c4"/><rect x="10" y="246" width="1" height="1" fill="#c4c4c4"/><rect x="10" y="248" width="1" height="1" fill="#c4c4c4"/><rect x="10" y="250" width="1" height="1" fill="#c4c4c4"/><rect x="10" y="252" width="1" height="1" fill="#c4c4c4"/><rect x="10" y="254" width="1" height="1" fill="#c4c4c4"/><rect x="10" y="256" width="1" height="1" fill="#c4c4c4"/><rect x="10" y="258" width="1" height="1" fill="#c4c4c4"/><rect x="10" y="260" width="1" height="1" fill="#c4c4c4"/><rect x="10" y="262" width="1" height="1" fill="#c4c4c4"/><rect x="10" y="264" width="1" height="1" fill="#c4c4c4"/><rect x="10" y="266" width="1" height="1" fill="#c4c4c4"/><rect x="10" y="268" width="1" height="1" fill="#c4c4c4"/><rect x="10" y="270" width="1" height="1" fill="#c4c4c4"/><rect x="10" y="272" width="1" height="1" fill="#c4c4c4"/><rect x="10" y="274" width="1" height="1" fill="#c4c4c4"/><rect x="10" y="276" width="1" height="1" fill="#c4c4c4"/><rect x="10" y="278" width="1" height="1" fill="#c4c4c4"/><rect x="10" y="280" width="1" height="1" fill="#c4c4c4"/><rect x="10" y="282" width="1" height="1" fill="#c4c4c4"/><rect x="10" y="284" width="1" height="1" fill="#c4c4c4"/><rect x="10" y="286" width="1" height="1" fill="#c4c4c4"/><rect x="10" y="288" width="1" height="1" fill="#c4c4c4"/><rect x="10" y="290" width="1" height="1" fill="#c4c4c4"/><rect x="10" y="292" width="1" height="1" fill="#c4c4c4"/><rect x="10" y="294" width="1" height="1" fill="#c4c4c4"/><rect x="10" y="296" width="1" height="1" fill="#c4c4c4"/><rect x="10" y="298" width="1" height="1" fill="#c4c4c4"/><rect x="10" y="300" width="1" height="1" fill="#c4c4c4"/><rect x="10" y="302" width="1" height="1" fill="#c4c4c4"/><rect x="10" y="304" width="1" height="1" fill="#c4c4c4"/><rect x="10" y="306" width="1" height="1" fill="#c4c4c4"/><rect x="10" y="308" width="1" height="1" fill="#c4c4c4"/><rect x="10" y="310" width="1" height="1" fill="#c4c4c4"/><rect x="10" y="312" width="1" height="1" fill="#c4c4c4"/><rect x="10" y="314" width="1" height="1" fill="#c4c4c4"/><rect x="10" y="316" width="1" height="1" fill="#c4c4c4"/><rect x="10" y="318" width="1" height="1" fill="#c4c4c4"/><rect x="10" y="320" width="1" height="1" fill="#c4c4c4"/><rect x="10" y="322" width="1" height="1" fill="#c4c4c4"/><rect x="10" y="324" width="1" height="1" fill="#c4c4c4"/><rect x="10" y="326" width="1" height="1" fill="#c4c4c4"/><rect x="10" y="328" width="1" height="1" fill="#c4c4c4"/><rect x="10" y="330" width="1" height="1" fill="#c4c4c4"/><rect x="10" y="332" width="1" height="1" fill="#c4c4c4"/><rect x="10" y="334" width="1" height="1" fill="#c4c4c4"/><rect x="10" y="336" width="1" height="1" fill="#c4c4c4"/><rect x="10" y="338" width="1" height="1" fill="#c4c4c4"/><rect x="10" y="340" width="1" height="1" fill="#c4c4c4"/><rect x="10" y="342" width="1" height="1" fill="#c4c4c4"/><rect x="10" y="344" width="1" height="1" fill="#c4c4c4"/><rect x="10" y="346" width="1" height="1" fill="#c4c4c4"/><rect x="10" y="348" width="1" height="1" fill="#c4c4c4"/><rect x="10" y="350" width="1" height="1" fill="#c4c4c4"/><rect x="10" y="352" width="1" height="1" fill="#c4c4c4"/><rect x="10" y="354" width="1" height="1" fill="#c4c4c4"/><rect x="10" y="356" width="1" height="1" fill="#c4c4c4"/><rect x="10" y="358" width="1" height="1" fill="#c4c4c4"/><rect x="10" y="360" width="1" height="1" fill="#c4c4c4"/><rect x="10" y="362" width="1" height="1" fill="#c4c4c4"/><rect x="10" y="364" width="1" height="1" fill="#c4c4c4"/><rect x="10" y="366" width="1" height="1" fill="#c4c4c4"/><rect x="10" y="368" width="1" height="1" fill="#c4c4c4"/><rect x="10" y="370" width="1" height="1" fill="#c4c4c4"/><rect x="10" y="372" width="1" height="1" fill="#c4c4c4"/><rect x="10" y="374" width="1" height="1" fill="#c4c4c4"/><rect x="10" y="376" width="1" height="1" fill="#c4c4c4"/><rect x="10" y="378" width="1" height="1" fill="#c4c4c4"/><rect x="10" y="380" width="1" height="1" fill="#c4c4c4"/><rect x="10" y="382" width="1" height="1" fill="#c4c4c4"/><rect x="10" y="384" width="1" height="1" fill="#c4c4c4"/><rect x="10" y="386" width="1" height="1" fill="#c4c4c4"/><rect x="10" y="388" width="1" height="1" fill="#c4c4c4"/><rect x="10" y="390" width="1" height="1" fill="#c4c4c4"/><rect x="10" y="392" width="1" height="1" fill="#c4c4c4"/><rect x="10" y="394" width="1" height="1" fill="#c4c4c4"/><rect x="10" y="396" width="1" height="1" fill="#c4c4c4"/><rect x="10" y="398" width="1" height="1" fill="#c4c4c4"/><rect x="10" y="400" width="1" height="1" fill="#c4c4c4"/><rect x="10" y="402" width="1" height="1" fill="#c4c4c4"/><rect x="10" y="404" width="1" height="1" fill="#c4c4c4"/><rect x="10" y="406" width="1" height="1" fill="#c4c4c4"/><rect x="10" y="408" width="1" height="1" fill="#c4c4c4"/><rect x="10" y="410" width="1" height="1" fill="#c4c4c4"/><rect x="10" y="412" width="1" height="1" fill="#c4c4c4"/><rect x="10" y="414" width="1" height="1" fill="#c4c4c4"/><rect x="10" y="416" width="1" height="1" fill="#c4c4c4"/><rect x="10" y="418" width="1" height="1" fill="#c4c4c4"/><rect x="10" y="420" width="1" height="1" fill="#c4c4c4"/><rect x="10" y="422" width="1" height="1" fill="#c4c4c4"/><rect x="10" y="424" width="1" height="1" fill="#c4c4c4"/><rect x="10" y="426" width="1" height="1" fill="#c4c4c4"/><rect x="10" y="428" width="1" height="1" fill="#c4c4c4"/><rect x="10" y="430" width="1" height="1" fill="#c4c4c4"/><rect x="10" y="432" width="1" height="1" fill="#c4c4c4"/><rect x="10" y="434" width="1" height="1" fill="#c4c4c4"/><rect x="10" y="436" width="1" height="1" fill="#c4c4c4"/><rect x="10" y="438" width="1" height="1" fill="#c4c4c4"/><rect x="10" y="440" width="1" height="1" fill="#c4c4c4"/><rect x="10" y="442" width="1" height="1" fill="#c4c4c4"/><rect x="10" y="444" width="1" height="1" fill="#c4c4c4"/><rect x="10" y="446" width="1" height="1" fill="#c4c4c4"/><rect x="10" y="448" width="1" height="1" fill="#c4c4c4"/><rect x="10" y="450" width="1" height="1" fill="#c4c4c4"/><rect x="10" y="452" width="1" height="1" fill="#c4c4c4"/><rect x="10" y="454" width="1" height="1" fill="#c4c4c4"/><rect x="10" y="456" width="1" height="1" fill="#c4c4c4"/><rect x="10" y="458" width="1" height="1" fill="#c4c4c4"/><rect x="10" y="460" width="1" height="1" fill="#c4c4c4"/><rect x="10" y="462" width="1" height="1" fill="#c4c4c4"/><rect x="10" y="464" width="1" height="1" fill="#c4c4c4"/><rect x="10" y="466" width="1" height="1" fill="#c4c4c4"/><rect x="10" y="468" width="1" height="1" fill="#c4c4c4"/><rect x="10" y="470" width="1" height="1" fill="#c4c4c4"/><rect x="10" y="472" width="1" height="1" fill="#c4c4c4"/><rect x="10" y="474" width="1" height="1" fill="#c4c4c4"/><rect x="10" y="476" width="1" height="1" fill="#c4c4c4"/><rect x="10" y="478" width="1" height="1" fill="#c4c4c4"/><rect x="10" y="480" width="1" height="1" fill="#c4c4c4"/><rect x="10" y="482" width="1" height="1" fill="#c4c4c4"/><rect x="10" y="484" width="1" height="1" fill="#c4c4c4"/><rect x="10" y="486" width="1" height="1" fill="#c4c4c4"/><rect x="10" y="488" width="1" height="1" fill="#c4c4c4"/><rect x="10" y="490" width="1" height="1" fill="#c4c4c4"/><rect x="10" y="492" width="1" height="1" fill="#c4c4c4"/><rect x="10" y="494" width="1" height="1" fill="#c4c4c4"/><rect x="10" y="496" width="1" height="1" fill="#c4c4c4"/><rect x="10" y="498" width="1" height="1" fill="#c4c4c4"/><rect x="10" y="500" width="1" height="1" fill="#c4c4c4"/><rect x="10" y="502" width="1" height="1" fill="#c4c4c4"/><rect x="10" y="504" width="1" height="1" fill="#c4c4c4"/><rect x="10" y="506" width="1" height="1" fill="#c4c4c4"/><rect x="10" y="508" width="1" height="1" fill="#c4c4c4"/><rect x="10" y="510" width="1" height="1" fill="#c4c4c4"/><rect x="10" y="512" width="1" height="1" fill="#c4c4c4"/><rect x="10" y="514" width="1" height="1" fill="#c4c4c4"/><rect x="10" y="516" width="1" height="1" fill="#c4c4c4"/><rect x="10" y="518" width="1" height="1" fill="#c4c4c4"/><rect x="10" y="520" width="1" height="1" fill="#c4c4c4"/><rect x="10" y="522" width="1" height="1" fill="#c4c4c4"/><rect x="10" y="524" width="1" height="1" fill="#c4c4c4"/><rect x="10" y="526" width="1" height="1" fill="#c4c4c4"/><rect x="10" y="528" width="1" height="1" fill="#c4c4c4"/><rect x="10" y="530" width="1" height="1" fill="#c4c4c4"/><rect x="10" y="532" width="1" height="1" fill="#c4c4c4"/><rect x="28" y="132" width="1" height="1" fill="#c4c4c4"/><rect x="28" y="134" width="1" height="1" fill="#c4c4c4"/><rect x="28" y="136" width="1" height="1" fill="#c4c4c4"/><rect x="28" y="138" width="1" height="1" fill="#c4c4c4"/><rect x="28" y="140" width="1" height="1" fill="#c4c4c4"/><rect x="28" y="142" width="1" height="1" fill="#c4c4c4"/><rect x="28" y="144" width="1" height="1" fill="#c4c4c4"/><rect x="28" y="146" width="1" height="1" fill="#c4c4c4"/><rect x="28" y="148" width="1" height="1" fill="#c4c4c4"/><rect x="28" y="150" width="1" height="1" fill="#c4c4c4"/><rect x="28" y="152" width="1" height="1" fill="#c4c4c4"/><rect x="28" y="154" width="1" height="1" fill="#c4c4c4"/><rect x="28" y="156" width="1" height="1" fill="#c4c4c4"/><rect x="28" y="158" width="1" height="1" fill="#c4c4c4"/><rect x="28" y="160" width="1" height="1" fill="#c4c4c4"/><rect x="28" y="162" width="1" height="1" fill="#c4c4c4"/><rect x="28" y="164" width="1" height="1" fill="#c4c4c4"/><rect x="28" y="166" width="1" height="1" fill="#c4c4c4"/><rect x="28" y="168" width="1" height="1" fill="#c4c4c4"/><rect x="28" y="170" width="1" height="1" fill="#c4c4c4"/><rect x="28" y="172" width="1" height="1" fill="#c4c4c4"/><rect x="28" y="174" width="1" height="1" fill="#c4c4c4"/><rect x="28" y="176" width="1" height="1" fill="#c4c4c4"/><rect x="28" y="178" width="1" height="1" fill="#c4c4c4"/><rect x="28" y="180" width="1" height="1" fill="#c4c4c4"/><rect x="28" y="182" width="1" height="1" fill="#c4c4c4"/><rect x="28" y="184" width="1" height="1" fill="#c4c4c4"/><rect x="28" y="186" width="1" height="1" fill="#c4c4c4"/><rect x="28" y="188" width="1" height="1" fill="#c4c4c4"/><rect x="28" y="190" width="1" height="1" fill="#c4c4c4"/><rect x="28" y="192" width="1" height="1" fill="#c4c4c4"/><rect x="28" y="194" width="1" height="1" fill="#c4c4c4"/><rect x="28" y="196" width="1" height="1" fill="#c4c4c4"/><rect x="28" y="198" width="1" height="1" fill="#c4c4c4"/><rect x="28" y="200" width="1" height="1" fill="#c4c4c4"/><rect x="28" y="202" width="1" height="1" fill="#c4c4c4"/><rect x="28" y="204" width="1" height="1" fill="#c4c4c4"/><rect x="28" y="206" width="1" height="1" fill="#c4c4c4"/><rect x="28" y="208" width="1" height="1" fill="#c4c4c4"/><rect x="28" y="210" width="1" height="1" fill="#c4c4c4"/><rect x="28" y="212" width="1" height="1" fill="#c4c4c4"/><rect x="28" y="214" width="1" height="1" fill="#c4c4c4"/><rect x="28" y="216" width="1" height="1" fill="#c4c4c4"/><rect x="28" y="218" width="1" height="1" fill="#c4c4c4"/><rect x="28" y="220" width="1" height="1" fill="#c4c4c4"/><rect x="28" y="222" width="1" height="1" fill="#c4c4c4"/><rect x="28" y="224" width="1" height="1" fill="#c4c4c4"/><rect x="28" y="226" width="1" height="1" fill="#c4c4c4"/><rect x="28" y="228" width="1" height="1" fill="#c4c4c4"/><rect x="28" y="230" width="1" height="1" fill="#c4c4c4"/><rect x="28" y="232" width="1" height="1" fill="#c4c4c4"/><rect x="28" y="234" width="1" height="1" fill="#c4c4c4"/><rect x="28" y="236" width="1" height="1" fill="#c4c4c4"/><rect x="28" y="238" width="1" height="1" fill="#c4c4c4"/><rect x="28" y="240" width="1" height="1" fill="#c4c4c4"/><rect x="28" y="242" width="1" height="1" fill="#c4c4c4"/><rect x="28" y="244" width="1" height="1" fill="#c4c4c4"/><rect x="28" y="246" width="1" height="1" fill="#c4c4c4"/><rect x="28" y="248" width="1" height="1" fill="#c4c4c4"/><rect x="28" y="250" width="1" height="1" fill="#c4c4c4"/><rect x="28" y="252" width="1" height="1" fill="#c4c4c4"/><rect x="28" y="254" width="1" height="1" fill="#c4c4c4"/><rect x="28" y="256" width="1" height="1" fill="#c4c4c4"/><rect x="28" y="258" width="1" height="1" fill="#c4c4c4"/><rect x="28" y="260" width="1" height="1" fill="#c4c4c4"/><rect x="28" y="262" width="1" height="1" fill="#c4c4c4"/><rect x="28" y="264" width="1" height="1" fill="#c4c4c4"/><rect x="28" y="266" width="1" height="1" fill="#c4c4c4"/><rect x="28" y="268" width="1" height="1" fill="#c4c4c4"/><rect x="28" y="270" width="1" height="1" fill="#c4c4c4"/><rect x="28" y="272" width="1" height="1" fill="#c4c4c4"/><rect x="28" y="274" width="1" height="1" fill="#c4c4c4"/><rect x="28" y="276" width="1" height="1" fill="#c4c4c4"/><rect x="28" y="278" width="1" height="1" fill="#c4c4c4"/><rect x="28" y="280" width="1" height="1" fill="#c4c4c4"/><rect x="28" y="282" width="1" height="1" fill="#c4c4c4"/><rect x="28" y="284" width="1" height="1" fill="#c4c4c4"/><rect x="28" y="286" width="1" height="1" fill="#c4c4c4"/><rect x="28" y="288" width="1" height="1" fill="#c4c4c4"/><rect x="28" y="290" width="1" height="1" fill="#c4c4c4"/><rect x="28" y="292" width="1" height="1" fill="#c4c4c4"/><rect x="28" y="294" width="1" height="1" fill="#c4c4c4"/><rect x="28" y="296" width="1" height="1" fill="#c4c4c4"/><rect x="28" y="298" width="1" height="1" fill="#c4c4c4"/><rect x="28" y="300" width="1" height="1" fill="#c4c4c4"/><rect x="28" y="302" width="1" height="1" fill="#c4c4c4"/><rect x="28" y="304" width="1" height="1" fill="#c4c4c4"/><rect x="28" y="306" width="1" height="1" fill="#c4c4c4"/><rect x="28" y="308" width="1" height="1" fill="#c4c4c4"/><rect x="28" y="310" width="1" height="1" fill="#c4c4c4"/><rect x="28" y="312" width="1" height="1" fill="#c4c4c4"/><rect x="28" y="314" width="1" height="1" fill="#c4c4c4"/><rect x="28" y="316" width="1" height="1" fill="#c4c4c4"/><rect x="28" y="318" width="1" height="1" fill="#c4c4c4"/><rect x="28" y="320" width="1" height="1" fill="#c4c4c4"/><rect x="28" y="322" width="1" height="1" fill="#c4c4c4"/><rect x="28" y="324" width="1" height="1" fill="#c4c4c4"/><rect x="28" y="326" width="1" height="1" fill="#c4c4c4"/><rect x="28" y="328" width="1" height="1" fill="#c4c4c4"/><rect x="28" y="330" width="1" height="1" fill="#c4c4c4"/><rect x="28" y="332" width="1" height="1" fill="#c4c4c4"/><rect x="28" y="334" width="1" height="1" fill="#c4c4c4"/><rect x="28" y="336" width="1" height="1" fill="#c4c4c4"/><rect x="28" y="338" width="1" height="1" fill="#c4c4c4"/><rect x="28" y="340" width="1" height="1" fill="#c4c4c4"/><rect x="28" y="342" width="1" height="1" fill="#c4c4c4"/><rect x="28" y="344" width="1" height="1" fill="#c4c4c4"/><rect x="28" y="346" width="1" height="1" fill="#c4c4c4"/><rect x="28" y="348" width="1" height="1" fill="#c4c4c4"/><rect x="28" y="350" width="1" height="1" fill="#c4c4c4"/><rect x="28" y="352" width="1" height="1" fill="#c4c4c4"/><rect x="28" y="354" width="1" height="1" fill="#c4c4c4"/><rect x="28" y="356" width="1" height="1" fill="#c4c4c4"/><rect x="28" y="358" width="1" height="1" fill="#c4c4c4"/><rect x="28" y="360" width="1" height="1" fill="#c4c4c4"/><rect x="28" y="362" width="1" height="1" fill="#c4c4c4"/><rect x="28" y="364" width="1" height="1" fill="#c4c4c4"/><rect x="28" y="366" width="1" height="1" fill="#c4c4c4"/><rect x="28" y="368" width="1" height="1" fill="#c4c4c4"/><rect x="28" y="370" width="1" height="1" fill="#c4c4c4"/><rect x="28" y="372" width="1" height="1" fill="#c4c4c4"/><rect x="28" y="374" width="1" height="1" fill="#c4c4c4"/><rect x="28" y="376" width="1" height="1" fill="#c4c4c4"/><rect x="28" y="378" width="1" height="1" fill="#c4c4c4"/><rect x="28" y="380" width="1" height="1" fill="#c4c4c4"/><rect x="28" y="412" width="1" height="1" fill="#c4c4c4"/><rect x="28" y="414" width="1" height="1" fill="#c4c4c4"/><rect x="28" y="416" width="1" height="1" fill="#c4c4c4"/><rect x="28" y="418" width="1" height="1" fill="#c4c4c4"/><rect x="28" y="420" width="1" height="1" fill="#c4c4c4"/><rect x="28" y="422" width="1" height="1" fill="#c4c4c4"/><rect x="28" y="424" width="1" height="1" fill="#c4c4c4"/><rect x="28" y="426" width="1" height="1" fill="#c4c4c4"/><rect x="28" y="428" width="1" height="1" fill="#c4c4c4"/><rect x="28" y="430" width="1" height="1" fill="#c4c4c4"/><rect x="28" y="432" width="1" height="1" fill="#c4c4c4"/><rect x="28" y="434" width="1" height="1" fill="#c4c4c4"/><rect x="28" y="436" width="1" height="1" fill="#c4c4c4"/><rect x="28" y="438" width="1" height="1" fill="#c4c4c4"/><rect x="28" y="440" width="1" height="1" fill="#c4c4c4"/><rect x="28" y="442" width="1" height="1" fill="#c4c4c4"/><rect x="28" y="444" width="1" height="1" fill="#c4c4c4"/><rect x="28" y="446" width="1" height="1" fill="#c4c4c4"/><rect x="28" y="448" width="1" height="1" fill="#c4c4c4"/><rect x="28" y="450" width="1" height="1" fill="#c4c4c4"/><rect x="28" y="452" width="1" height="1" fill="#c4c4c4"/><rect x="28" y="454" width="1" height="1" fill="#c4c4c4"/><rect x="28" y="456" width="1" height="1" fill="#c4c4c4"/><rect x="28" y="458" width="1" height="1" fill="#c4c4c4"/><rect x="28" y="460" width="1" height="1" fill="#c4c4c4"/><rect x="28" y="462" width="1" height="1" fill="#c4c4c4"/><rect x="28" y="464" width="1" height="1" fill="#c4c4c4"/><rect x="28" y="466" width="1" height="1" fill="#c4c4c4"/><rect x="28" y="468" width="1" height="1" fill="#c4c4c4"/><rect x="28" y="470" width="1" height="1" fill="#c4c4c4"/><rect x="28" y="472" width="1" height="1" fill="#c4c4c4"/><rect x="28" y="474" width="1" height="1" fill="#c4c4c4"/><rect x="28" y="476" width="1" height="1" fill="#c4c4c4"/><rect x="28" y="478" width="1" height="1" fill="#c4c4c4"/><rect x="28" y="480" width="1" height="1" fill="#c4c4c4"/><rect x="28" y="482" width="1" height="1" fill="#c4c4c4"/><rect x="28" y="484" width="1" height="1" fill="#c4c4c4"/><rect x="28" y="486" width="1" height="1" fill="#c4c4c4"/><rect x="28" y="488" width="1" height="1" fill="#c4c4c4"/><rect x="28" y="490" width="1" height="1" fill="#c4c4c4"/><rect x="28" y="492" width="1" height="1" fill="#c4c4c4"/><rect x="28" y="494" width="1" height="1" fill="#c4c4c4"/><rect x="28" y="496" width="1" height="1" fill="#c4c4c4"/><rect x="28" y="498" width="1" height="1" fill="#c4c4c4"/><rect x="28" y="500" width="1" height="1" fill="#c4c4c4"/><rect x="28" y="502" width="1" height="1" fill="#c4c4c4"/><rect x="28" y="504" width="1" height="1" fill="#c4c4c4"/><rect x="28" y="506" width="1" height="1" fill="#c4c4c4"/><rect x="28" y="508" width="1" height="1" fill="#c4c4c4"/><rect x="28" y="510" width="1" height="1" fill="#c4c4c4"/><rect x="28" y="512" width="1" height="1" fill="#c4c4c4"/><rect x="28" y="514" width="1" height="1" fill="#c4c4c4"/><rect x="28" y="516" width="1" height="1" fill="#c4c4c4"/><rect x="28" y="518" width="1" height="1" fill="#c4c4c4"/><rect x="28" y="520" width="1" height="1" fill="#c4c4c4"/><rect x="28" y="552" width="1" height="1" fill="#c4c4c4"/><rect x="28" y="554" width="1" height="1" fill="#c4c4c4"/><rect x="28" y="556" width="1" height="1" fill="#c4c4c4"/><rect x="28" y="558" width="1" height="1" fill="#c4c4c4"/><rect x="28" y="560" width="1" height="1" fill="#c4c4c4"/><rect x="28" y="562" width="1" height="1" fill="#c4c4c4"/><rect x="28" y="564" width="1" height="1" fill="#c4c4c4"/><rect x="28" y="566" width="1" height="1" fill="#c4c4c4"/><rect x="28" y="568" width="1" height="1" fill="#c4c4c4"/><rect x="28" y="570" width="1" height="1" fill="#c4c4c4"/><rect x="28" y="572" width="1" height="1" fill="#c4c4c4"/><rect x="28" y="574" width="1" height="1" fill="#c4c4c4"/><rect x="28" y="576" width="1" height="1" fill="#c4c4c4"/><rect x="28" y="578" width="1" height="1" fill="#c4c4c4"/><rect x="28" y="580" width="1" height="1" fill="#c4c4c4"/></svg>
<div class="a ti" style="left:43px;top:114px">Номенклатура</div><div class="a ti" style="left:61px;top:134px">Код номенкл.</div><div class="a ti" style="left:61px;top:154px">Наименование</div><div class="a ti" style="left:61px;top:174px">Полное наименование</div><div class="a ti" style="left:61px;top:194px">Артикул</div><div class="a ti" style="left:61px;top:214px">Группа номенклатуры</div><div class="a ti" style="left:61px;top:234px">Ед. изм.</div><div class="a ti" style="left:61px;top:254px">Примечание</div><div class="a ti" style="left:61px;top:274px">Размер</div><div class="a ti" style="left:61px;top:294px">Цвет</div><div class="a ti" style="left:61px;top:314px">Производитель</div><div class="a ti" style="left:61px;top:334px">Страна</div><div class="a ti" style="left:61px;top:354px">Бренд</div><div class="a ti" style="left:61px;top:374px">Отдел</div><div class="a ti" style="left:43px;top:394px">Цены</div><div class="a ti" style="left:61px;top:414px">Валюта</div><div class="a ti" style="left:61px;top:434px">Цена</div><div class="a ti" style="left:61px;top:454px">Цена - целая часть</div><div class="a ti" style="left:61px;top:474px">Цена - дробная часть</div><div class="a ti" style="left:61px;top:494px">Цена - тысячи</div><div class="a ti" style="left:61px;top:514px">Цена - сотни</div><div class="a ti" style="left:43px;top:534px">Прочее</div><div class="a ti" style="left:61px;top:554px">Дата</div><div class="a ti" style="left:61px;top:574px">Время</div>
<div class="a" style="left:210px;top:84px;width:1px;height:581px;background:#b8b8b8"></div>
<!-- right header -->
<div class="a" style="left:211px;top:84px;width:759px;height:52px;background:#e4e4e4"></div>
<div class="a" style="left:213px;top:85px;width:757px;height:50px;background:#eeeeee;border:1px solid #c4c4c4;border-right:none"></div>
<div class="a" style="left:211px;top:136px;width:759px;height:529px;background:#808080"></div>
<!-- label -->
<div class="a" style="left:211px;top:137px;width:227px;height:157px;background:#fff;border:1px solid #000"></div>
<svg class="a" style="left:0;top:0" width="440" height="300">
 <path fill="#000" fill-rule="evenodd" d="M215 146H229Q233 146 233 150V161Q233 164 230.8 167L234 180H228.2L224.8 168H221V180H215Z M221 153H227V161H221Z"/>
 <path fill="#000" d="M237.3 146H252V153H243V159.5H251.2V166.3H243V173H252V180H237.3Z"/>
 <path fill="#000" d="M260 146H273V153H262V173.8H268V165.5H265.3V161H273V176.5Q273 180 269.5 180H260Q255.7 180 255.7 175.7V150.3Q255.7 146 260 146Z"/>
 <rect x="276" y="146" width="19.5" height="34" rx="4.5" fill="#000"/>
 <rect x="282" y="152.3" width="7" height="6.5" fill="#fff"/>
 <rect x="283.7" y="154.8" width="3.6" height="1.8" rx="0.9" fill="#000"/>
 <rect x="285" y="158.5" width="1.2" height="4" fill="#fff"/>
 <rect x="282" y="162.4" width="7" height="6.8" fill="#fff"/>
 <rect x="282" y="170.5" width="7" height="2.8" fill="#fff"/>
 <path fill="#000" d="M302.5 146H314V153H304.4V159.3H310Q314 159.3 314 163.5V176Q314 180 310 180H298.3V173.3H307.4V165.5H302.5Q298.3 165.5 298.3 161.3V150.3Q298.3 146 302.5 146Z"/>
</svg>
<div class="a lt" style="left:321px;top:143px;font-size:16px;transform:scaleX(1.1)">#NAME#</div>
<div class="a lt" style="left:213px;top:211px;font-size:23px;transform:scaleX(1.03)">#PRICE#</div>
<div class="a lt" style="left:213px;top:242px;font-size:10.5px;transform:scaleX(1.11)">ЦЕНА ЗА #UNIT#</div>
<div class="a lt" style="left:237.5px;top:270px;font-size:12.5px;transform:scaleX(1.02)">#CODE#</div>
<div class="a lt" style="left:349px;top:269.5px;font-size:12.8px;transform:scaleX(1.04)">#DATE#</div>
<svg class="a" style="left:337px;top:202px" width="95" height="42" fill="#000"><rect x="0" y="0" width="1" height="42"/><rect x="2" y="0" width="1" height="42"/><rect x="4" y="0" width="2" height="34"/><rect x="7" y="0" width="3" height="34"/><rect x="11" y="0" width="1" height="34"/><rect x="14" y="0" width="3" height="34"/><rect x="19" y="0" width="2" height="34"/><rect x="23" y="0" width="1" height="34"/><rect x="26" y="0" width="1" height="34"/><rect x="30" y="0" width="1" height="34"/><rect x="33" y="0" width="3" height="34"/><rect x="37" y="0" width="1" height="34"/><rect x="39" y="0" width="2" height="34"/><rect x="42" y="0" width="3" height="34"/><rect x="46" y="0" width="1" height="42"/><rect x="48" y="0" width="1" height="42"/><rect x="50" y="0" width="3" height="34"/><rect x="55" y="0" width="1" height="34"/><rect x="57" y="0" width="1" height="34"/><rect x="62" y="0" width="1" height="34"/><rect x="64" y="0" width="1" height="34"/><rect x="67" y="0" width="3" height="34"/><rect x="71" y="0" width="3" height="34"/><rect x="76" y="0" width="1" height="34"/><rect x="78" y="0" width="2" height="34"/><rect x="82" y="0" width="2" height="34"/><rect x="85" y="0" width="1" height="34"/><rect x="89" y="0" width="1" height="34"/><rect x="92" y="0" width="1" height="42"/><rect x="94" y="0" width="1" height="42"/></svg>
<div class="a" style="left:331px;top:239px;font-size:11px;color:#000">8</div>
<div class="a" style="left:343px;top:239px;font-size:11px;color:#000;letter-spacing:-0.1px">801748</div>
<div class="a" style="left:390px;top:239px;font-size:11px;color:#000;letter-spacing:-0.1px">035017</div>
<!-- annotation -->
<div class="a" style="left:50px;top:24px;width:35px;height:33px;border:3px solid #ff0000;border-radius:2px"></div>
<svg class="a" style="left:0;top:0" width="970" height="665">
 <line x1="92" y1="63" x2="144.5" y2="111.5" stroke="#ff0000" stroke-width="3" stroke-linecap="round"/>
 <path d="M84 56L97 61L90.5 68.5z" fill="#ff0000"/>
</svg>
</body></html>
